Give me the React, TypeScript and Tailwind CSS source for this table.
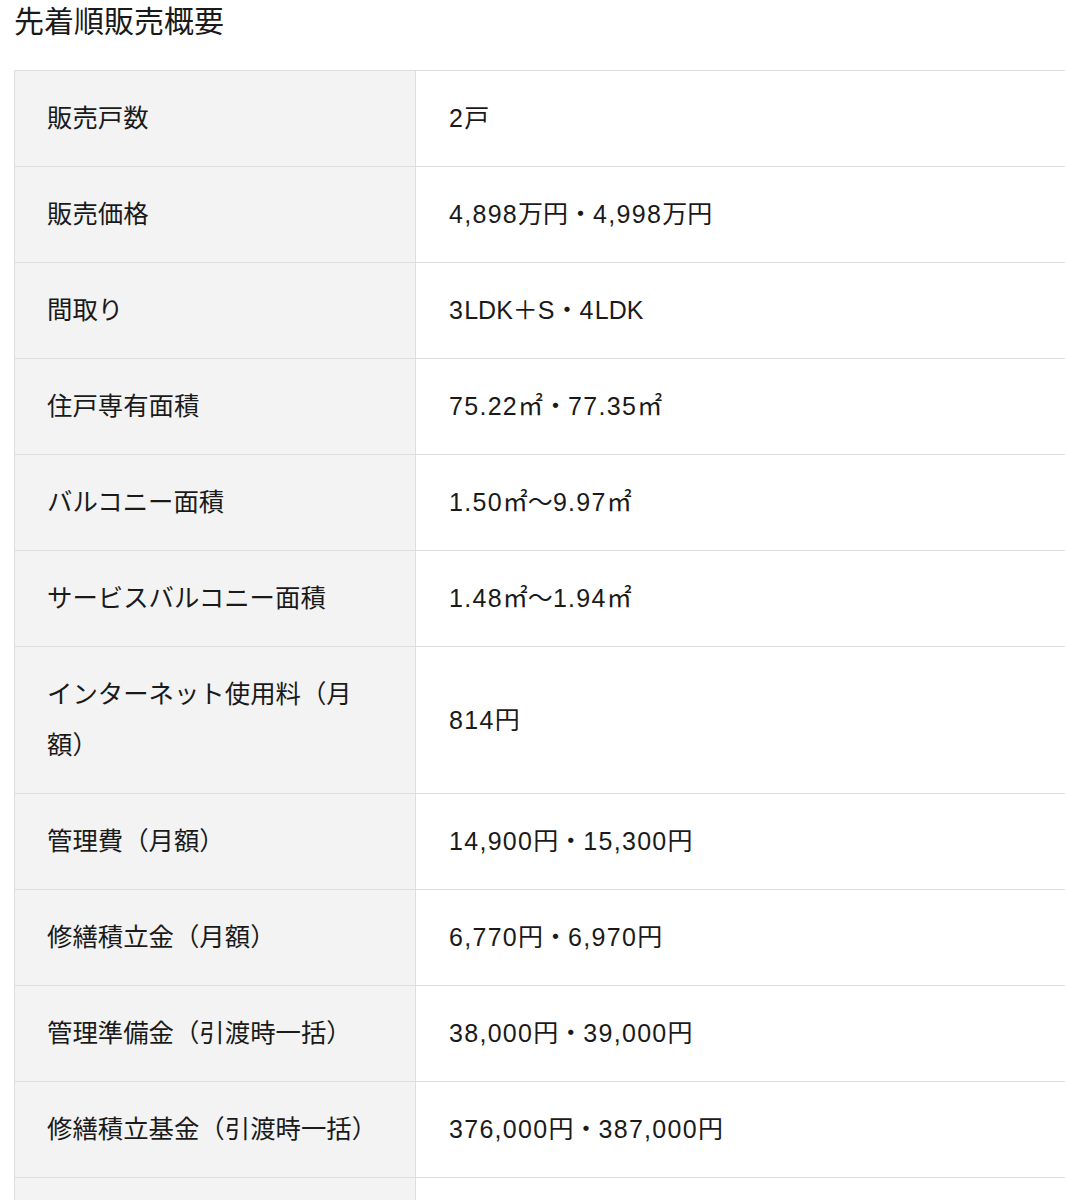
import React from "react";

const rows: [string, string][] = [
  ["販売戸数", "2戸"],
  ["販売価格", "4,898万円・4,998万円"],
  ["間取り", "3LDK＋S・4LDK"],
  ["住戸専有面積", "75.22㎡・77.35㎡"],
  ["バルコニー面積", "1.50㎡〜9.97㎡"],
  ["サービスバルコニー面積", "1.48㎡〜1.94㎡"],
  ["インターネット使用料（月額）", "814円"],
  ["管理費（月額）", "14,900円・15,300円"],
  ["修繕積立金（月額）", "6,770円・6,970円"],
  ["管理準備金（引渡時一括）", "38,000円・39,000円"],
  ["修繕積立基金（引渡時一括）", "376,000円・387,000円"],
  ["", ""],
];

function Value({ text }: { text: string }) {
  const parts = text.split(/([0-9.,]+)/).filter((p) => p !== "");
  return (
    <>
      {parts.map((p, i) =>
        /^[0-9.,]+$/.test(p) ? (
          <span key={i} className="tracking-[1.3px]">
            {p}
          </span>
        ) : (
          <span key={i}>{p}</span>
        )
      )}
    </>
  );
}

export default function App() {
  return (
    <div
      className="w-[1065px] overflow-hidden bg-white text-[#1a1a1a]"
      style={{ fontFamily: '"Liberation Sans", "Noto Sans CJK JP", sans-serif' }}
    >
      <h1 className="pl-[14px] text-[30px] leading-[44px] font-normal">先着順販売概要</h1>
      <div className="mt-[26px] ml-[14px] h-[1130px]">
        <table className="w-[1100px] border-collapse table-fixed">
          <colgroup>
            <col className="w-[401px]" />
            <col />
          </colgroup>
          <tbody>
            {rows.map(([k, v], i) => (
              <tr key={i}>
                <th className="border border-[#dedede] bg-[#f3f3f3] px-[32px] py-[22px] text-left align-middle text-[25.4px] leading-[51px] font-normal">
                  {k || "\u00a0"}
                </th>
                <td className="border border-[#dedede] bg-white px-[33px] py-[22px] align-middle text-[25px] leading-[51px]">
                  {v ? <Value text={v} /> : "\u00a0"}
                </td>
              </tr>
            ))}
          </tbody>
        </table>
      </div>
    </div>
  );
}
